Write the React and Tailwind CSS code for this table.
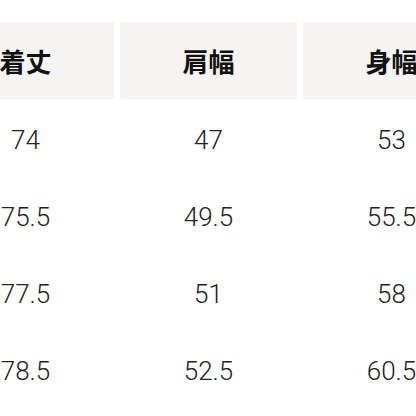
import React from 'react';

const headers = ['着丈', '肩幅', '身幅'];

const rows = [
  ['74', '47', '53'],
  ['75.5', '49.5', '55.5'],
  ['77.5', '51', '58'],
  ['78.5', '52.5', '60.5'],
];

export default function App() {
  return (
    <div className="w-[416px] h-[416px] overflow-hidden bg-white">
      <div className="ml-[-63px] pt-[22px]">
        {/* header */}
        <div className="flex gap-[6px]">
          {headers.map((h) => (
            <div
              key={h}
              className="w-[177px] h-[77px] shrink-0 flex items-center justify-center rounded-[2px] bg-[#f5f4f3] text-[26px] font-bold text-[#111]"
              style={{ fontFamily: '"Noto Sans CJK JP", "Noto Sans", sans-serif' }}
            >
              {h}
            </div>
          ))}
        </div>

        {/* rows */}
        <div className="mt-[3px]">
          {rows.map((r, i) => (
            <div key={i} className="flex gap-[6px]">
              {r.map((v, j) => (
                <div
                  key={j}
                  className="w-[177px] h-[77px] shrink-0 flex items-center justify-center text-[26px] font-light text-[#222]"
                  style={{ fontFamily: 'Roboto, "Liberation Sans", sans-serif' }}
                >
                  {v}
                </div>
              ))}
            </div>
          ))}
        </div>
      </div>
    </div>
  );
}
